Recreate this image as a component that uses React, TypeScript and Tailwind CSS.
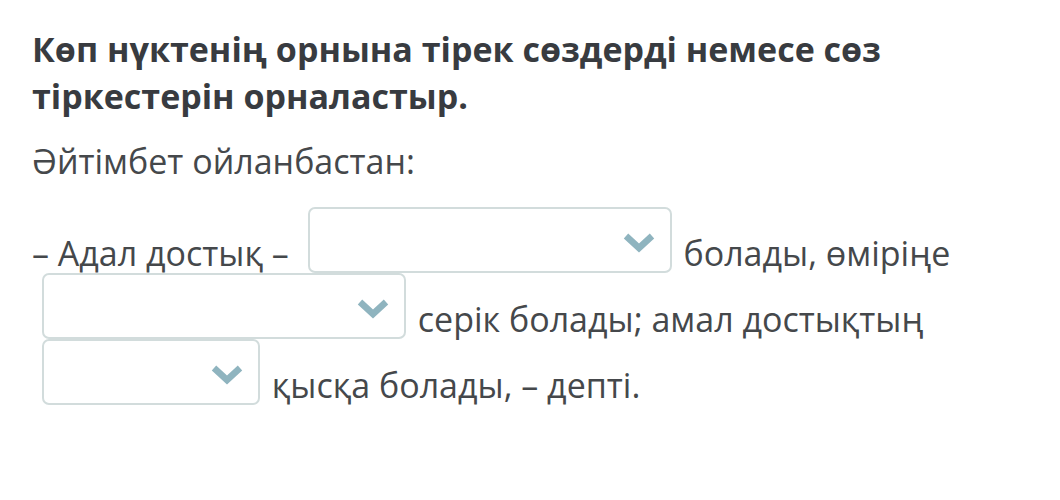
function Chevron() {
  return (
    <svg width="32" height="22" viewBox="0 0 32 22" className="block mt-[4px]">
      <path d="M3 5 L16 17 L29 5" fill="none" stroke="#8fb4bf" strokeWidth="6.5" strokeLinejoin="miter" />
    </svg>
  );
}

// empty answer box; its baseline comes from the chevron's bottom edge
function Blank({ width }: { width: string }) {
  return (
    <span
      className={`inline-flex items-center justify-end h-[66px] ${width} ml-[10px] mr-[3px] pr-[15px] align-[13px] rounded-[7px] border-2 border-[#d2dcdc] bg-white`}
    >
      <Chevron />
    </span>
  );
}

export default function App() {
  return (
    <div
      className="min-h-[500px] w-[1060px] bg-white px-8 pt-[26px]"
      style={{ fontFamily: '"Open Sans", "Noto Sans", sans-serif' }}
    >
      <h1 className="text-[34px] leading-[47px] font-bold text-[#383b40]">
        Көп нүктенің орнына тірек сөздерді немесе сөз тіркестерін орналастыр.
      </h1>
      <p className="mt-[19px] text-[34px] leading-[45px] text-[#45484b]">
        Әйтімбет ойланбастан:
      </p>
      <p className="mt-[23px] text-[34px] leading-[40px] text-[#45484b]">
        – Адал достық –{" "}
        <Blank width="w-[364px]" /> болады, өміріңе{" "}
        <Blank width="w-[364px]" /> серік болады; амал достықтың{" "}
        <Blank width="w-[218px]" /> қысқа болады, – депті.
      </p>
    </div>
  );
}
